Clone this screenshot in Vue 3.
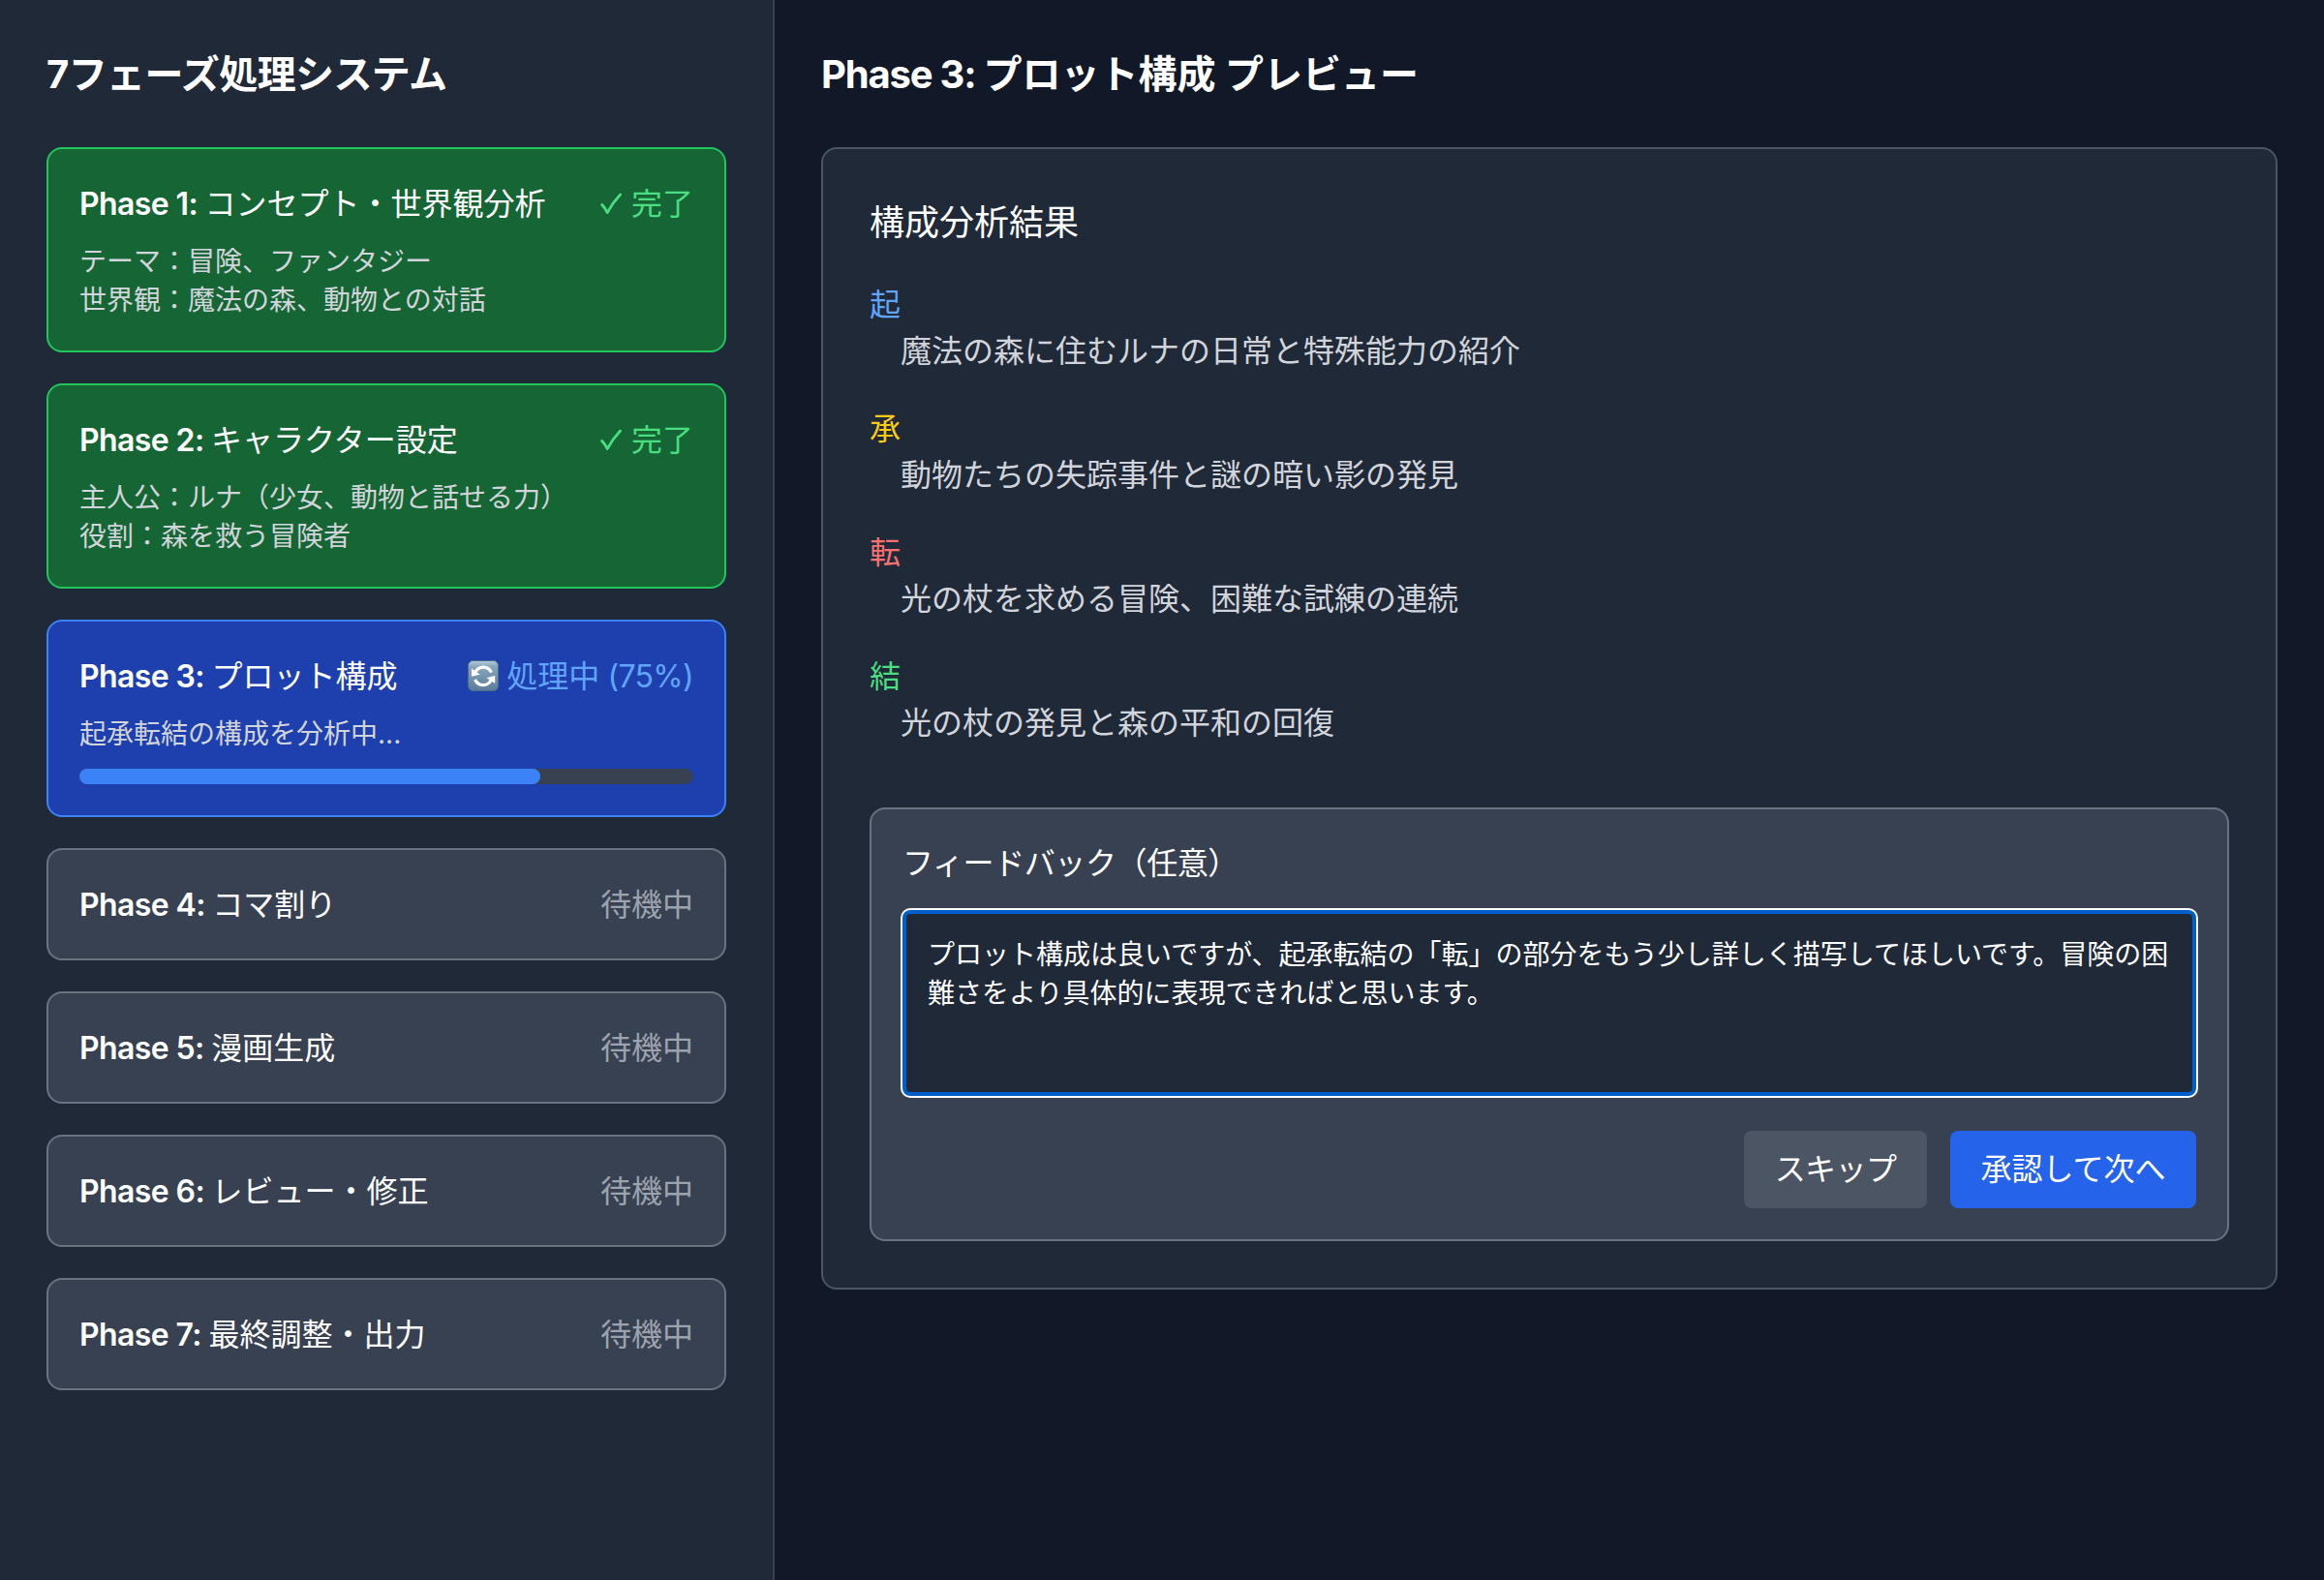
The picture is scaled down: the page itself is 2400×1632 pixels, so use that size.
<script setup>
const phases = [
  { n: 1, title: 'コンセプト・世界観分析', state: 'done', lines: ['テーマ：冒険、ファンタジー', '世界観：魔法の森、動物との対話'] },
  { n: 2, title: 'キャラクター設定', state: 'done', lines: ['主人公：ルナ（少女、動物と話せる力）', '役割：森を救う冒険者'] },
  { n: 3, title: 'プロット構成', state: 'active', lines: ['起承転結の構成を分析中...'], progress: 75 },
  { n: 4, title: 'コマ割り', state: 'wait', lines: [] },
  { n: 5, title: '漫画生成', state: 'wait', lines: [] },
  { n: 6, title: 'レビュー・修正', state: 'wait', lines: [] },
  { n: 7, title: '最終調整・出力', state: 'wait', lines: [] },
]
const plot = [
  { key: '起', tone: 'blue', text: '魔法の森に住むルナの日常と特殊能力の紹介' },
  { key: '承', tone: 'yellow', text: '動物たちの失踪事件と謎の暗い影の発見' },
  { key: '転', tone: 'red', text: '光の杖を求める冒険、困難な試練の連続' },
  { key: '結', tone: 'green', text: '光の杖の発見と森の平和の回復' },
]
const feedback = 'プロット構成は良いですが、起承転結の「転」の部分をもう少し詳しく描写してほしいです。冒険の困難さをより具体的に表現できればと思います。'
</script>

<template>
  <div class="layout">
    <aside class="sidebar">
      <h2 class="heading system">7フェーズ処理システム</h2>
      <div class="phases">
        <section v-for="p in phases" :key="p.n" class="phase" :class="p.state">
          <div class="row">
            <h3 class="title"><span class="latin">Phase {{ p.n }}: </span><span>{{ p.title }}</span></h3>
            <span v-if="p.state === 'done'" class="status">
              <svg class="check" viewBox="0 0 24 24"><path d="M2.6 13.4 Q5.4 16 8.2 21.6 Q13.5 11.5 21.6 3" fill="none" stroke="currentColor" stroke-width="2.8" stroke-linecap="round" stroke-linejoin="round" /></svg>
              <span class="word">完了</span>
            </span>
            <span v-else-if="p.state === 'active'" class="status">
              <svg class="sync" viewBox="0 0 32 32">
                <defs>
                  <linearGradient id="syncBg" x1="0" y1="0" x2="0" y2="1">
                    <stop offset="0" stop-color="#b4cbdc" />
                    <stop offset="0.2" stop-color="#86a5bd" />
                    <stop offset="1" stop-color="#5b7c9a" />
                  </linearGradient>
                </defs>
                <rect x="0.5" y="0.5" width="31" height="31" rx="5" fill="url(#syncBg)" stroke="#4d6c88" />
                <g fill="none" stroke="#fff" stroke-width="3.2">
                  <path d="M7.5 13.5 C10.5 5.5 20.5 4.8 24.5 12.5" />
                  <path d="M24.5 19.5 C21.5 27.2 11.5 27.8 7.5 20" />
                </g>
                <path d="M4 8.5 L4 16.8 L12.8 14.8 Z M28.2 24 L28.2 16 L19.4 18 Z" fill="#fff" />
              </svg>
              <span class="word">処理中<span class="percent"> ({{ p.progress }}%)</span></span>
            </span>
            <span v-else class="status"><span class="word">待機中</span></span>
          </div>
          <div v-if="p.lines.length" class="detail">
            <div v-for="l in p.lines" :key="l">{{ l }}</div>
          </div>
          <div v-if="p.progress" class="track"><div class="bar" :style="{ width: p.progress + '%' }"></div></div>
        </section>
      </div>
    </aside>

    <main class="main">
      <h2 class="heading"><span class="prefix">Phase 3: </span>プロット構成 プレビュー</h2>
      <section class="panel">
        <h3 class="subhead">構成分析結果</h3>
        <div class="plot">
          <div v-for="i in plot" :key="i.key">
            <div class="key" :class="i.tone">{{ i.key }}</div>
            <p class="text">{{ i.text }}</p>
          </div>
        </div>
        <div class="feedback">
          <label class="label" for="fb">フィードバック（任意）</label>
          <textarea id="fb" class="area" :value="feedback" spellcheck="false"></textarea>
          <div class="actions">
            <button class="btn skip">スキップ</button>
            <button class="btn approve">承認して次へ</button>
          </div>
        </div>
      </section>
    </main>
  </div>
</template>

<style>
body {
  margin: 0;
  background: #111827;
}
</style>

<style scoped>
* {
  box-sizing: border-box;
  margin: 0;
}
.layout {
  display: flex;
  height: 1632px;
  background: #111827;
  color: #fff;
  font-family: Inter, "Noto Sans CJK JP", sans-serif;
  font-size: 32px;
  line-height: 48px;
  white-space: nowrap;
}
.sidebar {
  width: 800px;
  padding: 48px;
  background: #1f2937;
  border-right: 2px solid #374151;
}
.main {
  flex: 1;
  padding: 48px;
}
.heading {
  height: 56px;
  margin-bottom: 48px;
  font-size: 40px;
  line-height: 58px;
  font-weight: 700;
}
.system {
  letter-spacing: -0.6px;
}
.prefix {
  white-space: pre;
  letter-spacing: -1.2px;
}
.phases {
  display: flex;
  flex-direction: column;
  gap: 32px;
}
.phase {
  padding: 32px;
  border: 2px solid;
  border-radius: 16px;
}
.done { background: #166534; border-color: #22c55e; }
.active { background: #1e40af; border-color: #3b82f6; }
.wait { background: #374151; border-color: #6b7280; }
.row {
  display: flex;
  justify-content: space-between;
  height: 48px;
}
.title {
  font-size: 32px;
  line-height: 50px;
  font-weight: 400;
}
.latin {
  font-weight: 600;
  white-space: pre;
  letter-spacing: -0.6px;
}
.status {
  display: flex;
  align-items: center;
}
.word {
  padding-top: 2px;
}
.percent {
  white-space: pre;
  letter-spacing: -0.7px;
}
.done .status { color: #4ade80; }
.active .status { color: #60a5fa; }
.wait .status { color: #9ca3af; }
.check {
  width: 24px;
  height: 24px;
  margin-right: 9px;
}
.sync {
  width: 32px;
  height: 32px;
  margin-right: 8px;
}
.detail {
  margin-top: 16px;
  font-size: 28px;
  line-height: 40px;
  color: #d1d5db;
}
.track {
  height: 16px;
  margin-top: 16px;
  border-radius: 8px;
  background: #374151;
}
.bar {
  height: 16px;
  border-radius: 8px;
  background: #3b82f6;
}
.panel {
  padding: 48px;
  border: 2px solid #4b5563;
  border-radius: 16px;
  background: #1f2937;
}
.subhead {
  height: 56px;
  margin-bottom: 32px;
  font-size: 36px;
  line-height: 56px;
  font-weight: 400;
}
.plot {
  display: flex;
  flex-direction: column;
  gap: 32px;
}
.key,
.text {
  height: 48px;
  line-height: 50px;
}
.blue { color: #60a5fa; }
.yellow { color: #facc15; }
.red { color: #f87171; }
.green { color: #4ade80; }
.text {
  margin-left: 32px;
  color: #d1d5db;
}
.feedback {
  margin-top: 64px;
  padding: 32px;
  border: 2px solid #6b7280;
  border-radius: 16px;
  background: #374151;
}
.label {
  display: block;
  margin-bottom: 24px;
  letter-spacing: -0.4px;
}
.area {
  display: block;
  width: 100%;
  height: 192px;
  padding: 22px 16px 22px 22px;
  border: 4px solid #005fcc;
  border-radius: 8px;
  outline: none;
  box-shadow: 0 0 0 2px #fff;
  resize: none;
  overflow: hidden;
  background: #1f2937;
  color: #fff;
  font-family: inherit;
  font-size: 28px;
  line-height: 40px;
}
.actions {
  display: flex;
  justify-content: flex-end;
  gap: 24px;
  margin-top: 36px;
}
.btn {
  height: 80px;
  padding: 0;
  border: 0;
  border-radius: 8px;
  color: #fff;
  font-family: inherit;
  font-size: 32px;
  line-height: 48px;
  text-align: center;
}
.skip {
  width: 189px;
  background: #4b5563;
  letter-spacing: -0.6px;
}
.approve {
  width: 254px;
  background: #2563eb;
}
</style>
